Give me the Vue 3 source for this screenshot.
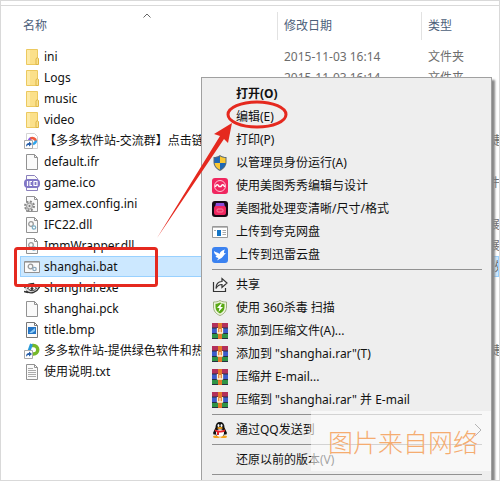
<script setup>
const files = [
  { icon: 'folder', name: 'ini', type: '文件夹' },
  { icon: 'folder', name: 'Logs', type: '文件夹' },
  { icon: 'folder', name: 'music', type: '文件夹' },
  { icon: 'folder', name: 'video', type: '文件夹' },
  { icon: 'group', name: '【多多软件站-交流群】点击链接', type: 'Internet 快捷方式' },
  { icon: 'blank', name: 'default.ifr', type: 'IFR 文件' },
  { icon: 'ico', name: 'game.ico', type: 'ICO 图片文件' },
  { icon: 'config', name: 'gamex.config.ini', type: '配置设置' },
  { icon: 'dll', name: 'IFC22.dll', type: '应用程序扩展' },
  { icon: 'dll', name: 'ImmWrapper.dll', type: '应用程序扩展' },
  { icon: 'bat', name: 'shanghai.bat', type: 'Windows 批处理文件', selected: true },
  { icon: 'exe', name: 'shanghai.exe', type: '应用程序' },
  { icon: 'blank', name: 'shanghai.pck', type: 'PCK 文件' },
  { icon: 'bmp', name: 'title.bmp', type: 'BMP 文件' },
  { icon: 'link', name: '多多软件站-提供绿色软件和热门', type: 'Internet 快捷方式' },
  { icon: 'txt', name: '使用说明.txt', type: '文本文档' }
]

const groups = [
  [
    { label: '打开(O)', bold: true },
    { label: '编辑(E)' },
    { label: '打印(P)' },
    { icon: 'shield', label: '以管理员身份运行(A)' },
    { icon: 'meitu', label: '使用美图秀秀编辑与设计' },
    { icon: 'batch', label: '美图批处理变清晰/尺寸/格式' },
    { icon: 'quark', label: '上传到夸克网盘' },
    { icon: 'xunlei', label: '上传到迅雷云盘' }
  ],
  [
    { icon: 'share', label: '共享' },
    { icon: 'safe', label: '使用 360杀毒 扫描' },
    { icon: 'rar', label: '添加到压缩文件(A)...' },
    { icon: 'rar', label: '添加到 "shanghai.rar"(T)' },
    { icon: 'rar', label: '压缩并 E-mail...' },
    { icon: 'rar', label: '压缩到 "shanghai.rar" 并 E-mail' }
  ],
  [{ icon: 'qq', label: '通过QQ发送到', sub: true }],
  [{ label: '还原以前的版本(V)' }]
]
</script>

<template>
  <svg class="defs" aria-hidden="true">
    <symbol id="folder" viewBox="0 0 16 16">
      <path d="M2.500.5h11v15h-11z" fill="#fbe08a" stroke="#ecc95f" />
      <path d="M3 1h3v14H3z" fill="#fdeaa7" />
      <path d="M12 15.500V10l1-1.500 1.500 1v6z" fill="#f9e190" stroke="#dfb746" />
    </symbol>
    <symbol id="blank" viewBox="0 0 16 16">
      <path d="M2.500.5h8l3 3v12h-11z" fill="#fafafa" stroke="#929292" />
      <path d="M10.500.5v3h3" fill="none" stroke="#929292" />
    </symbol>
    <symbol id="group" viewBox="0 0 16 16">
      <path d="M2.500.5h8l3 3v12h-11z" fill="#fff" stroke="#d4d4d4" />
      <path d="M5 9a4 4 0 0 1 2-4" fill="none" stroke="#8a5ce0" stroke-width="2.500" />
      <path d="M6.500 5.500A4 4 0 0 1 12 8" fill="none" stroke="#f05b3c" stroke-width="2.500" />
      <path d="M12 7.500a4 4 0 0 1-3 3.500" fill="none" stroke="#2fa6ec" stroke-width="2.500" />
      <path d="M.5 7.500h8v8h-8z" fill="#fff" stroke="#aaa" />
      <path d="M2 14c0-3 1-4 3-4V8.500L8 11l-3 2.500V12c-1.500 0-2 .5-3 2z" fill="#245ca8" />
    </symbol>
    <symbol id="link" viewBox="0 0 16 16">
      <path d="M8 2.500h1.500a4 4 0 0 1 0 8.500H8" fill="none" stroke="#76b82a" stroke-width="3.500" />
      <path d="M7.500 1 5 8" stroke="#2a9ad8" stroke-width="3" />
      <path d="M.5 7.500h8v8h-8z" fill="#fff" stroke="#aaa" />
      <path d="M2 14c0-3 1-4 3-4V8.500L8 11l-3 2.500V12c-1.500 0-2 .5-3 2z" fill="#245ca8" />
    </symbol>
    <symbol id="ico" viewBox="0 0 16 16">
      <path d="M2.500 5V.5h8l3 3V5M2.500 12v3.500h11V12" fill="#fafafa" stroke="#8b80bc" />
      <rect y="4" width="16" height="9" rx="4" fill="#8177c6" />
      <path d="M3.500 6v5M8 6.500H6v4h2M10 6.500h3v4h-3z" fill="none" stroke="#fff" stroke-width="1.200" />
    </symbol>
    <symbol id="config" viewBox="0 0 16 16">
      <path d="M2.500.5h8l3 3v12h-11zM10.500.5v3h3" fill="#fafafa" stroke="#929292" />
      <circle cx="5.500" cy="10" r="4.500" fill="#eee" stroke="#888" stroke-width="2" stroke-dasharray="2 1.500" />
      <circle cx="5.500" cy="10" r="3" fill="#ddd" stroke="#999" />
      <circle cx="5.500" cy="10" r="1" fill="#777" />
    </symbol>
    <symbol id="dll" viewBox="0 0 16 16">
      <path d="M2.500.5h8l3 3v12h-11zM10.500.5v3h3" fill="#fafafa" stroke="#929292" />
      <circle cx="7" cy="7" r="2.300" fill="none" stroke="#999" stroke-width="1.300" />
      <circle cx="10" cy="10.500" r="1.700" fill="#fff" stroke="#7fb0c6" stroke-width="1.300" />
    </symbol>
    <symbol id="bat" viewBox="0 0 16 16">
      <path d="M.5 2.500h15v11H.5z" fill="#fafafa" stroke="#929292" />
      <path d="M1 3.500h14" stroke="#bbb" />
      <circle cx="6.500" cy="7.500" r="2.300" fill="none" stroke="#999" stroke-width="1.300" />
      <circle cx="10.500" cy="10" r="1.700" fill="#fff" stroke="#8ba8bd" stroke-width="1.300" />
    </symbol>
    <symbol id="exe" viewBox="0 0 16 16">
      <path d="M.5 8C3 3.500 11 2.500 15.500 7 13 12 7 15 2 11" fill="#d8d8d8" stroke="#333" stroke-width="1.300" />
      <path d="M3.500 8c3-3 7-2 9 0-2 3-6 4-9 0z" fill="#fff" stroke="#222" />
      <circle cx="8" cy="8.500" r="1.500" fill="#333" />
      <path d="M4 4.500 10 3.500M0 11.500l4 1M13 4.500l2 1" stroke="#333" stroke-width="1.300" />
    </symbol>
    <symbol id="bmp" viewBox="0 0 16 16">
      <path d="M2.500.5h8l3 3v12h-11zM10.500.5v3h3" fill="#fafafa" stroke="#777" />
      <path d="M4 5h8v7H4z" fill="#2374c4" />
      <path d="m5 11 6-5v3l-3 2z" fill="#8bc9f5" />
    </symbol>
    <symbol id="txt" viewBox="0 0 16 16">
      <path d="M2.500.5h8l3 3v12h-11zM10.500.5v3h3" fill="#fafafa" stroke="#929292" />
      <path d="M4 4.500h5M4 6.500h8M4 8.500h8M4 10.500h8M4 12.500h8" stroke="#aaa" />
    </symbol>
    <symbol id="shield" viewBox="0 0 16 16">
      <path d="M8 0c2 1.500 4 2 6.500 2v5c0 4-2.500 7-6.500 9-4-2-6.500-5-6.500-9V2C4 2 6 1.500 8 0z" fill="#5b6b78" />
      <path d="M7.800 1.300V8H2.500V3c2 0 3.800-.7 5.300-1.700zM8 8h5.400c-.2 3-2.200 5.200-5.400 6.800z" fill="#1f68b5" />
      <path d="M8 1.300C9.700 2.300 11.500 3 13.500 3v5H8zM2.600 8H8v6.800C4.800 13.200 2.900 11 2.600 8z" fill="#fac832" />
    </symbol>
    <symbol id="meitu" viewBox="0 0 16 16">
      <rect width="16" height="16" rx="3" fill="#f0265f" />
      <circle cx="8" cy="8" r="5.500" fill="none" stroke="#ffc4d4" />
      <path d="M3.500 9c.5-3 2.500-3 3.500-.5h2c1-2.500 3-2.500 3.500.5" fill="none" stroke="#fff" stroke-width="1.400" />
    </symbol>
    <symbol id="batch" viewBox="0 0 16 16">
      <rect width="16" height="16" rx="3" fill="#160a15" />
      <path d="M4 2h8l1 4H3z" fill="#8c4bd8" />
      <rect x="2" y="5" width="12" height="9" rx="2" fill="#f0265f" />
      <rect x="5" y="8" width="6" height="3" rx="1" fill="none" stroke="#ff7c9e" />
    </symbol>
    <symbol id="quark" viewBox="0 0 16 16">
      <path d="M.5 2.500h15v11H.5z" fill="#fff" stroke="#999" />
      <path d="M1 3.500h14" stroke="#bbb" />
      <path d="M5 6h4v6H5z" fill="#1475c6" />
      <path d="M10.500 6.500H14M10.500 8.500H14M10.500 10.500H14M2 6.500h2" stroke="#aaa" />
    </symbol>
    <symbol id="xunlei" viewBox="0 0 16 16">
      <rect width="16" height="16" rx="3" fill="#3b82f0" />
      <path d="M2 4c2 1.500 4 1.500 5.500 3 .5-2 2.500-4 5.500-4.500-1 1.500-1 2.500-1 3.500l2 .5c-2 .5-2.500 3-4.500 4.500L5 13.500l1.500-2.500C5 11 4 10 3.500 9l1.500-.5C3 7.500 2 6 2 4z" fill="#fff" />
    </symbol>
    <symbol id="share" viewBox="0 0 16 16">
      <path d="M1.500 5v9.500h12V11" fill="none" stroke="#333" stroke-width="1.200" />
      <path d="M4 11.500c0-4 2-7 6-7V1.500l5 4.500-5 4.500V7.500c-3 0-4.500 1-6 4z" fill="#f7f7f7" stroke="#333" stroke-width="1.200" />
    </symbol>
    <symbol id="safe" viewBox="0 0 16 16">
      <path d="M8 .5c2 1.300 4 1.500 6.500 1.500v5c0 4-2.500 7-6.500 8.500C4 14 1.500 11 1.500 7V2C4 2 6 1.800 8 .5z" fill="#eff5dd" stroke="#9bb07c" />
      <path d="M8 2.500c1.500 1 3 1.300 4.500 1.300V7c0 3-1.500 5-4.500 6.500C5 12 3.500 10 3.500 7V3.800C5 3.800 6.500 3.500 8 2.500z" fill="#58a814" />
      <path d="M9 3.500 5 8h2.500L6.500 12 11 7H8.500L10 3.500z" fill="#fff" />
    </symbol>
    <symbol id="rar" viewBox="0 0 16 16">
      <path d="M0 0h16v5H0z" fill="#b3305a" />
      <path d="M0 5h16v5.500H0z" fill="#3c5ccb" />
      <path d="M0 10.500h16V16H0z" fill="#2f9446" />
      <path d="M0 5h16M0 10.500h16M0 15.500h16" stroke="#263040" />
      <path d="M6 0h4v16H6z" fill="#e57929" />
      <path d="M5.500 5v5h5V5M8 6v4" fill="none" stroke="#fff3d8" stroke-width="1.300" />
    </symbol>
    <symbol id="qq" viewBox="0 0 16 16">
      <ellipse cx="4.500" cy="14.800" rx="3.500" ry="1.200" fill="#f5a31a" />
      <ellipse cx="11.500" cy="14.800" rx="3.500" ry="1.200" fill="#f5a31a" />
      <path d="M8 0c3 0 4.500 2 4.500 5.500L15 11l-1 2-1-1c-1 3-9 3-10 0l-1 1-1-2 2.500-5.500C3.500 2 5 0 8 0z" fill="#111" />
      <ellipse cx="8" cy="11" rx="4" ry="3.700" fill="#fff" />
      <ellipse cx="6.500" cy="3.500" rx="1" ry="1.500" fill="#fff" />
      <ellipse cx="9.500" cy="3.500" rx="1" ry="1.500" fill="#fff" />
      <ellipse cx="8" cy="6" rx="2.800" ry="1" fill="#f5a31a" />
      <path d="M3 7.500c3 1.500 7 1.500 10 0v2c-2 1-4 1.200-6 1V13H5v-3l-2-.7z" fill="#e3232c" />
    </symbol>
  </svg>

  <main class="window">
    <table class="files">
      <colgroup>
        <col />
        <col class="col-date" />
        <col class="col-type" />
      </colgroup>
      <thead>
        <tr>
          <th>
            名称
            <svg class="sort" viewBox="0 0 8 5"><path d="M.5 4.500 4 1l3.500 3.500" /></svg>
          </th>
          <th class="line">修改日期</th>
          <th class="line">类型</th>
        </tr>
      </thead>
      <tbody>
        <tr v-for="file in files" :key="file.name" :class="{ selected: file.selected }">
          <td>
            <div class="name">
              <svg class="icon"><use :href="'#' + file.icon" /></svg>
              <span>{{ file.name }}</span>
            </div>
          </td>
          <td class="info">2015-11-03 16:14</td>
          <td class="info">{{ file.type }}</td>
        </tr>
      </tbody>
    </table>

    <div class="menu">
      <div v-for="(group, i) in groups" :key="i" class="group">
        <button v-for="item in group" :key="item.label" class="item" :class="{ bold: item.bold }">
          <svg class="icon"><use v-if="item.icon" :href="'#' + item.icon" /></svg>
          <span>{{ item.label }}</span>
          <svg v-if="item.sub" class="more" viewBox="0 0 8 14"><path d="m1 1 6 6-6 6" /></svg>
        </button>
      </div>
    </div>

    <svg class="marks" width="300" height="300" aria-hidden="true">
      <rect x="15.500" y="248.500" width="141" height="37" rx="2" />
      <ellipse cx="257" cy="114.500" rx="29" ry="12.500" />
      <path d="m157 238 63-102-6-2 18-11-4 20-4-4z" />
    </svg>

    <div class="watermark">图片来自网络</div>
  </main>
</template>

<style>
body {
  margin: 0;
  overflow: hidden;
}
</style>

<style scoped>
.defs {
  position: absolute;
  width: 0;
  height: 0;
}

.window {
  position: relative;
  box-sizing: border-box;
  height: 100vh;
  padding: 4px 0 0 19px;
  border: 1px solid #d9d9d9;
  overflow: hidden;
  background: #fff;
  color: #111;
  font: 12px/20px "Noto Sans", "Noto Sans CJK SC", sans-serif;
}

.window::before {
  content: "";
  display: block;
  height: 1px;
  margin-left: -19px;
  background: #d9d9d9;
}

.files {
  width: 100%;
  table-layout: fixed;
  border-collapse: collapse;
}

.col-date {
  width: 144px;
}

.col-type {
  width: 78px;
}

th {
  position: relative;
  height: 40px;
  padding: 0 0 0 3px;
  color: #4c607a;
  font-weight: normal;
  text-align: left;
}

.line {
  padding-left: 7px;
  background: linear-gradient(#e2e2e2, #e2e2e2) 0 6px / 1px 28px no-repeat;
}

.sort {
  position: absolute;
  top: 7px;
  left: 123px;
  width: 8px;
  height: 5px;
  fill: none;
  stroke: #666;
}

td {
  height: 21px;
  padding: 0;
  overflow: hidden;
  white-space: nowrap;
}

.name {
  display: flex;
  align-items: center;
  gap: 4px;
  padding-left: 4px;
}

.icon {
  flex: none;
  width: 16px;
  height: 16px;
}

.info {
  padding-left: 7px;
  color: #6d6d6d;
}

.selected {
  background: #cce8ff;
  outline: 1px solid #99d1ff;
  outline-offset: -1px;
}

.menu {
  position: absolute;
  top: 76px;
  right: 7px;
  left: 200px;
  padding: 4px 9px 24px 10px;
  border: 1px solid #a0a0a0;
  background: #eee;
  box-shadow: 3px 3px 2px #888;
}

.group::after {
  content: "";
  display: block;
  height: 1px;
  margin: 3px 0;
  background: #919191;
}

.item {
  display: flex;
  align-items: center;
  gap: 8px;
  width: 100%;
  height: 23px;
  padding: 0;
  border: 0;
  background: none;
  color: #111;
  font: inherit;
  text-align: left;
  white-space: nowrap;
}

.item.bold {
  font-weight: bold;
}

.more {
  width: 8px;
  height: 14px;
  margin-left: auto;
  fill: none;
  stroke: #444;
}

.marks {
  position: absolute;
  top: -1px;
  left: -1px;
  fill: none;
  stroke: #e5291f;
  stroke-width: 3;
}

.marks path {
  fill: #e5291f;
  stroke: none;
}

.watermark {
  position: absolute;
  right: 8px;
  bottom: 9px;
  width: 180px;
  box-sizing: border-box;
  padding-left: 17px;
  background: rgba(255, 255, 255, 0.6);
  color: #f5ac70;
  font: 300 25px/60px "Noto Sans CJK SC", sans-serif;
  white-space: nowrap;
}
</style>
